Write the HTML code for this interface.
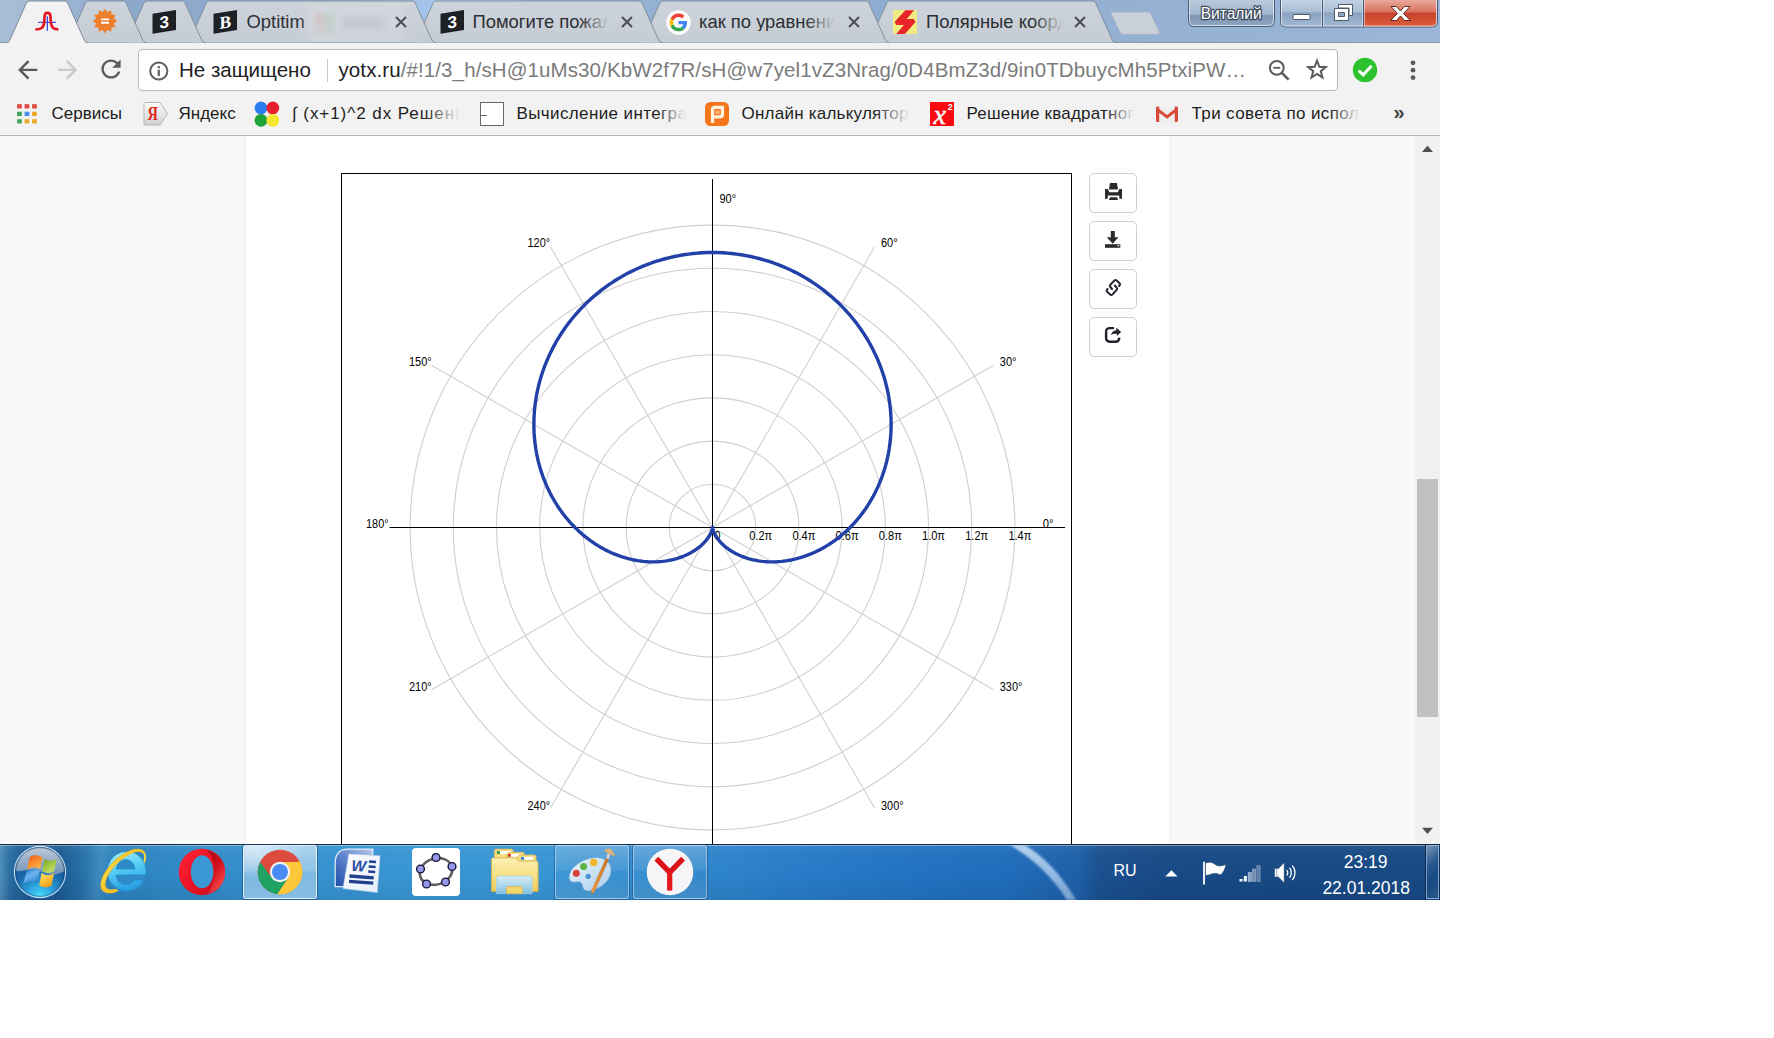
<!DOCTYPE html>
<html lang="ru"><head><meta charset="utf-8"><title>yotx.ru</title>
<style>
html,body{margin:0;padding:0;background:#fff;}
body{width:1774px;height:1038px;overflow:hidden;position:relative;font-family:"Liberation Sans",sans-serif;}
#shot{position:absolute;left:0;top:0;width:1440px;height:900px;overflow:hidden;background:#fff;}
.abs{position:absolute;}
.t{position:absolute;white-space:nowrap;line-height:1;}

#frame{position:absolute;left:0;top:0;width:1440px;height:43px;
 background:linear-gradient(90deg,#a9bed7 0px,#9cb5d3 60px,#8ca9cc 130px,#8eabce 300px,#a6c7ec 440px,#a4c5ea 470px,#94b1d4 640px,#8eaccf 900px,#93b0d3 1100px,#9ab7da 1440px);}
#toolbar{position:absolute;left:0;top:42px;width:1440px;height:93px;background:#f2f2f2;border-bottom:1px solid #b6b6b6;}
#omni{position:absolute;left:138px;top:49px;width:1198px;height:40px;background:#fff;border:1px solid #b9b9b9;border-radius:4px;box-sizing:content-box;}
.tabt{font-size:18.4px;color:#2b2f33;top:12px;}
.bm{font-size:17px;color:#1d1d1d;top:105px;}
.fade{position:absolute;}

#page{position:absolute;left:0;top:136px;width:1440px;height:708px;background:#f8f8f8;overflow:hidden;}
#col{position:absolute;left:246px;top:0;width:923px;height:708px;background:#fff;box-shadow:0 0 3px 1px rgba(0,0,0,.035);}
#sb{position:absolute;left:1415px;top:0;width:25px;height:708px;background:#f1f1f1;}
#thumb{position:absolute;left:1417px;top:343px;width:21px;height:238px;background:#c1c1c1;}
.pbtn{position:absolute;left:1089px;width:46px;height:38px;border:1px solid #d0d0d0;border-radius:5px;background:#fff;}

#tb{position:absolute;left:0;top:843px;width:1440px;height:57px;overflow:hidden;}
#tbbg{position:absolute;left:0;top:1px;width:1440px;height:56px;
 background:linear-gradient(90deg,#4f8fbb 0,#2a6c9f 10px,#1c5c95 26px,#1c5a92 60px,#2770a8 82px,#3385bd 100px,#2d83be 118px,#2f88c4 170px,#3590cd 260px,#3896d4 420px,#3794d4 560px,#2f86cc 700px,#287cc7 800px,#2272c0 920px,#206cba 1010px,#1e60a8 1078px,#1a5090 1100px,#184a86 1160px,#174983 1300px,#174a84 1440px);}
#tbbg:before{content:"";position:absolute;left:0;top:0;width:1440px;height:56px;
 background:linear-gradient(180deg,rgba(16,34,58,.9) 0,rgba(16,34,58,.9) 1px,rgba(255,255,255,.42) 1px,rgba(255,255,255,.42) 2px,rgba(255,255,255,.06) 2.2px,rgba(255,255,255,.02) 10px,rgba(0,0,0,0) 30px,rgba(0,0,20,.07) 56px);}
.tbtn{position:absolute;top:1.5px;height:54px;border-radius:3px;box-sizing:border-box;}
.tray{color:#fff;}

</style></head><body>
<div id="shot">
<div id="frame"></div>
<div id="toolbar"></div>
<svg class="abs" style="left:0;top:0" width="1440" height="44" viewBox="0 0 1440 44">
<defs><linearGradient id="itab" x1="0" y1="0" x2="0" y2="1"><stop offset="0" stop-color="#cdd3da"/><stop offset="1" stop-color="#c6ccd4"/></linearGradient></defs>
<rect x="0" y="42" width="1440" height="1" fill="#8f99a6"/>
<path d="M1112.5 12 L1147 12 C1149.5 12 1150.5 13 1151.5 15 L1159 31 C1160 33.5 1159 34.5 1156.5 34.5 L1124 34.5 C1121.5 34.5 1120.5 33.5 1119.5 31.5 L1111.5 15 C1110.5 13 1110.5 12 1112.5 12Z" fill="#c9d0d9" stroke="#a4b3c6" stroke-width="1"/>
<path d="M866.5 42.5 Q869 42.5 869.99 40.3 L886.61 3.2 Q887.6 1 890.1 1 L1092.3 1 Q1094.8 1 1095.79 3.2 L1112.41 40.3 Q1113.4 42.5 1115.9 42.5" fill="url(#itab)" stroke="#828e9e" stroke-width="1"/>
<path d="M639.7 42.5 Q642.2 42.5 643.19 40.3 L659.81 3.2 Q660.8 1 663.3 1 L865.5 1 Q868 1 868.99 3.2 L885.61 40.3 Q886.6 42.5 889.1 42.5" fill="url(#itab)" stroke="#828e9e" stroke-width="1"/>
<path d="M412.9 42.5 Q415.4 42.5 416.39 40.3 L433.01 3.2 Q434 1 436.5 1 L638.7 1 Q641.2 1 642.19 3.2 L658.81 40.3 Q659.8 42.5 662.3 42.5" fill="url(#itab)" stroke="#828e9e" stroke-width="1"/>
<path d="M186.1 42.5 Q188.6 42.5 189.59 40.3 L206.21 3.2 Q207.2 1 209.7 1 L411.9 1 Q414.4 1 415.39 3.2 L432.01 40.3 Q433 42.5 435.5 42.5" fill="url(#itab)" stroke="#828e9e" stroke-width="1"/>
<path d="M123.7 42.5 Q126.2 42.5 127.19 40.3 L143.81 3.2 Q144.8 1 147.3 1 L181.7 1 Q184.2 1 185.19 3.2 L201.81 40.3 Q202.8 42.5 205.3 42.5" fill="url(#itab)" stroke="#828e9e" stroke-width="1"/>
<path d="M65.2 42.5 Q67.7 42.5 68.69 40.3 L85.31 3.2 Q86.3 1 88.8 1 L122.8 1 Q125.3 1 126.29 3.2 L142.91 40.3 Q143.9 42.5 146.4 42.5" fill="url(#itab)" stroke="#828e9e" stroke-width="1"/>
<path d="M6.2 42.5 Q8.7 42.5 9.69 40.3 L26.31 3.2 Q27.3 1 29.8 1 L64.3 1 Q66.8 1 67.79 3.2 L84.41 40.3 Q85.4 42.5 87.9 42.5" fill="#f2f2f2" stroke="#7d8999" stroke-width="1"/>
<rect x="9.3" y="42" width="75.5" height="2" fill="#f2f2f2"/>
</svg>
<div class="t tabt" style="left:246.5px;top:12.5px;width:70px;overflow:hidden;">Optitim<span class="abs" style="right:0;top:0;bottom:0;width:4px;background:linear-gradient(90deg,#cad0d800,#cad0d8)"></span></div>
<div class="abs" style="left:300px;top:3px;width:112px;height:38px;background:linear-gradient(90deg,rgba(214,218,224,0),rgba(214,218,224,.55) 12px,rgba(214,218,224,.55) 100px,rgba(214,218,224,0))"></div>
<svg class="abs" style="left:306px;top:6px" width="100" height="34" viewBox="0 0 100 34"><defs><filter id="cb" x="-20%" y="-20%" width="140%" height="140%"><feGaussianBlur stdDeviation="2.6"/></filter></defs><g filter="url(#cb)" opacity=".2"><rect x="9" y="7" width="9" height="10" fill="#e0776a"/><rect x="19" y="7" width="9" height="10" fill="#7fbf7a"/><rect x="9" y="18" width="9" height="10" fill="#c9a08a"/><rect x="19" y="18" width="9" height="10" fill="#9ab58f"/><rect x="36" y="11" width="42" height="12" fill="#9aa0aa"/></g></svg>
<svg class="abs" style="left:392.7px;top:14px" width="16" height="16" viewBox="-8 -8 16 16"><path d="M-5 -5L5 5M5 -5L-5 5" stroke="#4a4f55" stroke-width="2" fill="none"/></svg>
<div class="t tabt" style="left:472.5px;top:12.5px;width:136px;overflow:hidden;">Помогите пожалуйста<span class="abs" style="right:0;top:0;bottom:0;width:30px;background:linear-gradient(90deg,#cad0d800,#cad0d8)"></span></div>
<svg class="abs" style="left:619.3px;top:14px" width="16" height="16" viewBox="-8 -8 16 16"><path d="M-5 -5L5 5M5 -5L-5 5" stroke="#4a4f55" stroke-width="2" fill="none"/></svg>
<div class="t tabt" style="left:699px;top:12.5px;width:136px;overflow:hidden;">как по уравнению<span class="abs" style="right:0;top:0;bottom:0;width:30px;background:linear-gradient(90deg,#cad0d800,#cad0d8)"></span></div>
<svg class="abs" style="left:846px;top:14px" width="16" height="16" viewBox="-8 -8 16 16"><path d="M-5 -5L5 5M5 -5L-5 5" stroke="#4a4f55" stroke-width="2" fill="none"/></svg>
<div class="t tabt" style="left:926px;top:12.5px;width:137px;overflow:hidden;">Полярные координаты<span class="abs" style="right:0;top:0;bottom:0;width:30px;background:linear-gradient(90deg,#cad0d800,#cad0d8)"></span></div>
<svg class="abs" style="left:1072.2px;top:14px" width="16" height="16" viewBox="-8 -8 16 16"><path d="M-5 -5L5 5M5 -5L-5 5" stroke="#4a4f55" stroke-width="2" fill="none"/></svg>
<div id="omni"></div>
<div class="t" style="left:179px;top:59.5px;font-size:20.5px;color:#222;">Не защищено</div>
<div class="abs" style="left:327px;top:59px;width:1px;height:23px;background:#c8c8c8"></div>
<div class="t" style="left:338.5px;top:59.5px;font-size:20.5px;color:#222;letter-spacing:0.1px">yotx.ru<span style="color:#7b7b7b">/#!1/3_h/sH@1uMs30/KbW2f7R/sH@w7yel1vZ3Nrag/0D4BmZ3d/9in0TDbuycMh5PtxiPW…</span></div>
<svg class="abs" style="left:33px;top:9px;" width="28" height="26" viewBox="0 0 28 26"><path d="M14.35 7.3V21.7M5 13.4H23.1" stroke="#3f4ce6" stroke-width="1.3" fill="none"/><path d="M2.4 20.4C8 20.4 10.6 19 11.2 13L11.6 7C11.8 4.2 12.8 3.8 14.5 3.8C16.2 3.8 17.2 4.2 17.4 7L17.8 13C18.4 19 21 20.4 25.4 20.4" stroke="#e01b24" stroke-width="2.7" fill="none" stroke-linecap="butt"/></svg>
<svg class="abs" style="left:90.8px;top:7.4px;" width="28" height="28" viewBox="0 0 28 28"><polygon points="14,1.7 16.41,5.02 20.15,3.35 20.58,7.42 24.65,7.85 22.98,11.59 26.3,14 22.98,16.41 24.65,20.15 20.58,20.58 20.15,24.65 16.41,22.98 14,26.3 11.59,22.98 7.85,24.65 7.42,20.58 3.35,20.15 5.02,16.41 1.7,14 5.02,11.59 3.35,7.85 7.42,7.42 7.85,3.35 11.59,5.02" fill="#ee7f2e"/><rect x="10" y="11.4" width="8" height="1.9" rx=".5" fill="#fff"/><rect x="10" y="14.8" width="8" height="1.9" rx=".5" fill="#fff"/></svg>
<svg class="abs" style="left:152px;top:9px;" width="26" height="26" viewBox="0 0 26 26"><path d="M0.5 4.8L24 1V21L0.5 24.8Z" fill="#1d2126"/><text x="12.3" y="19" font-family="Liberation Sans,sans-serif" font-weight="bold" font-size="17" fill="#fff" text-anchor="middle" transform="skewY(-9) translate(0,2)">3</text></svg>
<svg class="abs" style="left:213px;top:9px;" width="26" height="26" viewBox="0 0 26 26"><path d="M0.5 4.8L24 1V21L0.5 24.8Z" fill="#1d2126"/><text x="12.3" y="19" font-family="Liberation Serif,serif" font-weight="bold" font-size="17.5" fill="#fff" text-anchor="middle" transform="skewY(-9) translate(0,2)">B</text></svg>
<svg class="abs" style="left:440px;top:9px;" width="26" height="26" viewBox="0 0 26 26"><path d="M0.5 4.8L24 1V21L0.5 24.8Z" fill="#1d2126"/><text x="12.3" y="19" font-family="Liberation Sans,sans-serif" font-weight="bold" font-size="17" fill="#fff" text-anchor="middle" transform="skewY(-9) translate(0,2)">3</text></svg>
<svg class="abs" style="left:665.5px;top:9.5px;" width="25" height="25" viewBox="0 0 25 25"><circle cx="12.5" cy="12.5" r="12.3" fill="#fbfbfb"/><g transform="translate(3.6,3.6) scale(0.37)"><path fill="#EA4335" d="M24 9.5c3.54 0 6.71 1.22 9.21 3.6l6.85-6.85C35.9 2.38 30.47 0 24 0 14.62 0 6.51 5.38 2.56 13.22l7.98 6.19C12.43 13.72 17.74 9.5 24 9.5z"/><path fill="#4285F4" d="M46.98 24.55c0-1.57-.15-3.09-.38-4.55H24v9.02h12.94c-.58 2.96-2.26 5.48-4.78 7.18l7.73 6c4.51-4.18 7.09-10.36 7.09-17.65z"/><path fill="#FBBC05" d="M10.53 28.59c-.48-1.45-.76-2.99-.76-4.59s.27-3.14.76-4.59l-7.98-6.19C.92 16.46 0 20.12 0 24c0 3.88.92 7.54 2.56 10.78l7.97-6.19z"/><path fill="#34A853" d="M24 48c6.48 0 11.93-2.13 15.89-5.81l-7.73-6c-2.15 1.45-4.92 2.3-8.16 2.3-6.26 0-11.57-4.22-13.47-9.91l-7.98 6.19C6.51 42.62 14.62 48 24 48z"/></g></svg>
<svg class="abs" style="left:893px;top:10px;" width="24" height="24" viewBox="0 0 24 24"><rect width="24" height="24" fill="#f1ec82"/><path d="M12.3 0.15H21.1L13.7 9.1H20.8L22.5 12L11.85 23.9H3.2L10.9 14.95H3.4L1.5 12Z" fill="#e8252b"/></svg>
<svg class="abs" style="left:1180px;top:0" width="260" height="34" viewBox="0 0 260 34">
<defs>
<linearGradient id="wb" x1="0" y1="0" x2="0" y2="1"><stop offset="0" stop-color="#c4d3e4"/><stop offset=".45" stop-color="#a9bdd4"/><stop offset=".5" stop-color="#8aa3c0"/><stop offset="1" stop-color="#a4bad3"/></linearGradient>
<linearGradient id="wc" x1="0" y1="0" x2="0" y2="1"><stop offset="0" stop-color="#e9a99d"/><stop offset=".45" stop-color="#d9705c"/><stop offset=".5" stop-color="#c8432c"/><stop offset="1" stop-color="#dd5e3c"/></linearGradient>
<linearGradient id="wu" x1="0" y1="0" x2="0" y2="1"><stop offset="0" stop-color="#bccbdc"/><stop offset=".55" stop-color="#a2b6cd"/><stop offset=".6" stop-color="#7f97b3"/><stop offset="1" stop-color="#8fa6c1"/></linearGradient>
<filter id="bl"><feGaussianBlur stdDeviation="2"/></filter>
</defs>
<path d="M12 25H92M104 26H254" stroke="#51657f" stroke-width="8" opacity=".7" filter="url(#bl)"/>
<path d="M8.5 -1V20C8.5 24 10.5 26.5 14.5 26.5H88.5C92.5 26.5 94.5 24 94.5 20V-1Z" fill="url(#wu)" stroke="#4e5f75" stroke-width="1"/>
<path d="M9.5 0V20C9.5 23.5 11 25.5 14.5 25.5H88.5C92 25.5 93.5 23.5 93.5 20V0" fill="none" stroke="#dfe8f2" stroke-width="1" opacity=".8"/>
<path d="M100.5 -1V21C100.5 25 102.5 27 106.5 27H251.5C255.5 27 257.5 25 257.5 21V-1Z" fill="url(#wb)" stroke="#4a5a70" stroke-width="1"/>
<path d="M183.5 0H257V21C257 24.5 255 26.5 251.5 26.5H183.5Z" fill="url(#wc)"/>
<path d="M101.5 0V21C101.5 24.5 103 26 106.5 26H251.5C255 26 256.5 24.5 256.5 21V0" fill="none" stroke="#eef3f9" stroke-width="1" opacity=".75"/>
<path d="M142.5 0V26.5M183.5 0V26.5" stroke="#4a5a70" stroke-width="1"/>
<path d="M143.5 0V26M184.5 0V26M141.5 0V26M182.5 0V26" stroke="#e8eef6" stroke-width="1" opacity=".55"/>
<rect x="113" y="14.5" width="17" height="5" rx="1" fill="#fff" stroke="#4c5a6c" stroke-width="1"/>
<g fill="#fff" stroke="#4c5a6c" stroke-width="1"><path d="M158.5 4.5H172.5V15.5H169V8H158.5Z"/><path d="M154.5 8.5H168.5V20.5H154.5Z M158.5 12.5V16.5H164.5V12.5Z" fill-rule="evenodd"/></g>
<path d="M211 6.5H216.5L220.5 11L224.5 6.5H230L223.5 13.5L230.5 20.5H224.5L220.5 16L216.5 20.5H210.5L217.5 13.5Z" fill="#fff" stroke="#5b2a22" stroke-width="1" stroke-linejoin="round"/>
<text x="51.2" y="19.3" text-anchor="middle" textLength="61" lengthAdjust="spacingAndGlyphs" font-family="Liberation Sans,sans-serif" font-size="17" fill="#fff" stroke="#3c4a5c" stroke-width="2.6" stroke-linejoin="round" paint-order="stroke" style="paint-order:stroke">Виталий</text>
</svg>
<svg class="abs" style="left:13.6px;top:56.1px;" width="24" height="24" viewBox="0.6 0.4 20 20"><path d="M20 11H7.83l5.59-5.59L12 4l-8 8 8 8 1.41-1.41L7.83 13H20v-2z" fill="#5a5a5a"/></svg>
<svg class="abs" style="left:55.4px;top:56.1px;" width="24" height="24" viewBox="1.4 0.4 20 20"><path d="M12 4l-1.41 1.41L16.17 11H4v2h12.17l-5.58 5.59L12 20l8-8z" fill="#c9c9c9"/></svg>
<svg class="abs" style="left:98.7px;top:56.7px;" width="24" height="24" viewBox="2 2 20 20"><path d="M17.65 6.35C16.2 4.9 14.21 4 12 4c-4.42 0-7.99 3.58-7.99 8s3.57 8 7.99 8c3.73 0 6.84-2.55 7.73-6h-2.08c-.820 2.33-3.04 4-5.65 4-3.31 0-6-2.69-6-6s2.69-6 6-6c1.66 0 3.14.690 4.22 1.78L13 11h7V4l-2.35 2.35z" fill="#5a5a5a"/></svg>
<svg class="abs" style="left:147px;top:59px;" width="24" height="24" viewBox="0 0 24 24"><circle cx="11.8" cy="12" r="8.6" fill="none" stroke="#5f5f5f" stroke-width="2"/><rect x="10.7" y="10.7" width="2.2" height="6.3" fill="#5f5f5f"/><rect x="10.7" y="7" width="2.2" height="2.3" fill="#5f5f5f"/></svg>
<svg class="abs" style="left:1266px;top:57px;" width="26" height="26" viewBox="0 0 26 26"><circle cx="10.8" cy="10.8" r="6.9" fill="none" stroke="#5a5a5a" stroke-width="2"/><path d="M15.8 15.8L22.6 22.6" stroke="#5a5a5a" stroke-width="2.6"/><path d="M7.3 10.8H14.3" stroke="#5a5a5a" stroke-width="1.8"/></svg>
<svg class="abs" style="left:1304px;top:56px;" width="26" height="26" viewBox="0 0 26 26"><polygon points="13,4.7 15.35,10.76 21.84,11.13 16.8,15.24 18.47,21.52 13,18 7.53,21.52 9.2,15.24 4.16,11.13 10.65,10.76" fill="none" stroke="#5a5a5a" stroke-width="2" stroke-linejoin="miter"/></svg>
<svg class="abs" style="left:1352px;top:57px;" width="26" height="26" viewBox="0 0 26 26"><circle cx="13" cy="13" r="12.2" fill="#2cc12f"/><path d="M6.8 13.6L11.2 17.8L19.6 8.8" fill="none" stroke="#fff" stroke-width="3"/></svg>
<svg class="abs" style="left:1408px;top:58px;" width="10" height="24" viewBox="0 0 10 24"><circle cx="5" cy="4.8" r="2.4" fill="#5a5a5a"/><circle cx="5" cy="12.2" r="2.4" fill="#5a5a5a"/><circle cx="5" cy="19.6" r="2.4" fill="#5a5a5a"/></svg>
<svg class="abs" style="left:17px;top:103.5px;" width="20" height="20" viewBox="0 0 20 20"><rect x="0.1" y="0.2" width="4.7" height="4.3" fill="#dc4b3e"/><rect x="7.6" y="0.2" width="4.7" height="4.3" fill="#dc4b3e"/><rect x="15.1" y="0.2" width="4.7" height="4.3" fill="#dc4b3e"/><rect x="0.1" y="7.7" width="4.7" height="4.3" fill="#3fa45b"/><rect x="7.6" y="7.7" width="4.7" height="4.3" fill="#4a8af4"/><rect x="15.1" y="7.7" width="4.7" height="4.3" fill="#e9a928"/><rect x="0.1" y="15.2" width="4.7" height="4.3" fill="#3fa45b"/><rect x="7.6" y="15.2" width="4.7" height="4.3" fill="#e9a928"/><rect x="15.1" y="15.2" width="4.7" height="4.3" fill="#e9a928"/></svg>
<div class="t bm" style="left:51.5px;letter-spacing:0.02px">Сервисы</div>
<svg class="abs" style="left:142.6px;top:101px;" width="26" height="26" viewBox="0 0 26 26"><defs><linearGradient id="yg" x1="0" y1="0" x2="0" y2="1"><stop offset="0" stop-color="#fdfdfd"/><stop offset="1" stop-color="#cfcfcf"/></linearGradient></defs><path d="M2.5 1.5H17L24.5 12.5L17 24H2.5C1.5 24 1 23.5 1 22.5V3C1 2 1.5 1.5 2.5 1.5Z" fill="url(#yg)" stroke="#b5b5b5" stroke-width="1"/><text x="9.8" y="19.5" font-family="Liberation Serif,serif" font-weight="bold" font-size="18" fill="#dd2a20" text-anchor="middle" transform="scale(0.8,1) translate(2.4,0)">Я</text></svg>
<div class="t bm" style="left:178.5px;letter-spacing:0px">Яндекс</div>
<svg class="abs" style="left:253px;top:99.5px;" width="28" height="28" viewBox="0 0 28 28"><circle cx="8" cy="8" r="6.4" fill="#2e7df0"/><circle cx="19.8" cy="8" r="6.4" fill="#e8212d"/><circle cx="8" cy="20.3" r="6.4" fill="#1fa336"/><circle cx="19.8" cy="20.3" r="6.4" fill="#f5e62f"/></svg>
<div class="t bm" style="left:292px;top:105px;width:168px;overflow:hidden;letter-spacing:0.95px;">∫ (x+1)^2 dx Решение<span class="abs" style="right:0;top:0;bottom:0;width:36px;background:linear-gradient(90deg,#f2f2f200,#f2f2f2)"></span></div>
<div class="abs" style="left:480px;top:102px;width:22px;height:22px;border:1.5px solid #686868;background:#fff"></div><div class="abs" style="left:481px;top:115px;width:6px;height:1.3px;background:#666"></div>
<div class="t bm" style="left:516.5px;top:105px;width:169px;overflow:hidden;letter-spacing:0.38px;">Вычисление интеграла<span class="abs" style="right:0;top:0;bottom:0;width:30px;background:linear-gradient(90deg,#f2f2f200,#f2f2f2)"></span></div>
<svg class="abs" style="left:705px;top:102px;" width="24" height="24" viewBox="0 0 24 24"><rect width="24" height="24" rx="5.5" fill="#f4751a"/><path d="M7.55 21.1V7.6Q7.55 5.45 9.7 5.45H17.45V12.3Q17.45 14.95 14.8 14.95H9" fill="none" stroke="#fdf2dc" stroke-width="3.3"/><rect x="10.4" y="8.3" width="4.2" height="3.8" fill="#f9b47c"/></svg>
<div class="t bm" style="left:741.5px;top:105px;width:168px;overflow:hidden;letter-spacing:0.23px;">Онлайн калькулятор<span class="abs" style="right:0;top:0;bottom:0;width:36px;background:linear-gradient(90deg,#f2f2f200,#f2f2f2)"></span></div>
<svg class="abs" style="left:930px;top:102px;" width="24" height="24" viewBox="0 0 24 24"><rect width="24" height="24" fill="#f80a10"/><text x="9.6" y="22" font-family="Liberation Serif,serif" font-style="italic" font-size="28" fill="#fff" stroke="#fff" stroke-width=".5" text-anchor="middle">x</text><text x="20.2" y="8.3" font-family="Liberation Sans,sans-serif" font-weight="bold" font-size="9" fill="#fff" text-anchor="middle">2</text></svg>
<div class="t bm" style="left:966.5px;top:105px;width:168px;overflow:hidden;letter-spacing:0.23px;">Решение квадратного<span class="abs" style="right:0;top:0;bottom:0;width:30px;background:linear-gradient(90deg,#f2f2f200,#f2f2f2)"></span></div>
<svg class="abs" style="left:1155px;top:105px;" width="24" height="18" viewBox="0 0 24 18"><rect x="1" y="1.5" width="22" height="15.5" rx="1.5" fill="#eeeeee"/><path d="M1 3C1 2 1.8 1.5 2.8 1.5H4.2V17H2.8C1.8 17 1 16.5 1 15.5Z M23 3C23 2 22.2 1.5 21.2 1.5H19.8V17H21.2C22.2 17 23 16.5 23 15.5Z" fill="#d94a38"/><path d="M1.8 2.2L12 10L22.2 2.2L22.2 6L12 13.8L1.8 6Z" fill="#d94a38"/></svg>
<div class="t bm" style="left:1191.5px;top:105px;width:168px;overflow:hidden;letter-spacing:0.38px;">Три совета по использованию<span class="abs" style="right:0;top:0;bottom:0;width:30px;background:linear-gradient(90deg,#f2f2f200,#f2f2f2)"></span></div>
<div class="t" style="left:1393.5px;top:102px;font-size:20px;color:#444;font-weight:bold">»</div>
<div id="page">
<div id="col"></div>
<div id="sb"></div>
<div id="thumb"></div>
<svg class="abs" style="left:1415px;top:0" width="25" height="708" viewBox="0 0 25 708"><path d="M7 16L12.5 9.8L18 16Z" fill="#505050"/><path d="M7 691.8L12.5 698L18 691.8Z" fill="#505050"/></svg>
<svg class="abs" style="left:341px;top:37px" width="731" height="690" viewBox="0 0 731 690" font-family="Liberation Sans,sans-serif">
<rect x="0.5" y="0.5" width="730" height="710" fill="#fff" stroke="#000" stroke-width="1"/>
<circle cx="371.5" cy="354.5" r="43.2" fill="none" stroke="#cfcfcf" stroke-width="1.1"/>
<circle cx="371.5" cy="354.5" r="86.4" fill="none" stroke="#cfcfcf" stroke-width="1.1"/>
<circle cx="371.5" cy="354.5" r="129.6" fill="none" stroke="#cfcfcf" stroke-width="1.1"/>
<circle cx="371.5" cy="354.5" r="172.8" fill="none" stroke="#cfcfcf" stroke-width="1.1"/>
<circle cx="371.5" cy="354.5" r="216" fill="none" stroke="#cfcfcf" stroke-width="1.1"/>
<circle cx="371.5" cy="354.5" r="259.2" fill="none" stroke="#cfcfcf" stroke-width="1.1"/>
<circle cx="371.5" cy="354.5" r="302.4" fill="none" stroke="#cfcfcf" stroke-width="1.1"/>
<path d="M371.5 354.5L652.09 192.5M371.5 354.5L533.5 73.91M371.5 354.5L209.5 73.91M371.5 354.5L90.91 192.5M371.5 354.5L90.91 516.5M371.5 354.5L209.5 635.09M371.5 354.5L533.5 635.09M371.5 354.5L652.09 516.5" stroke="#cfcfcf" stroke-width="1.1" fill="none"/>
<path d="M48.5 354.5H724M371.5 6V690" stroke="#000" stroke-width="1" fill="none"/>
<text x="378.5" y="30" font-size="12.3" text-anchor="start" fill="#000" textLength="16.65" lengthAdjust="spacingAndGlyphs">90°</text>
<text x="186.5" y="74" font-size="12.3" text-anchor="start" fill="#000" textLength="22.6" lengthAdjust="spacingAndGlyphs">120°</text>
<text x="540" y="74" font-size="12.3" text-anchor="start" fill="#000" textLength="16.65" lengthAdjust="spacingAndGlyphs">60°</text>
<text x="68" y="193" font-size="12.3" text-anchor="start" fill="#000" textLength="22.6" lengthAdjust="spacingAndGlyphs">150°</text>
<text x="658.8" y="193" font-size="12.3" text-anchor="start" fill="#000" textLength="16.65" lengthAdjust="spacingAndGlyphs">30°</text>
<text x="25" y="355" font-size="12.3" text-anchor="start" fill="#000" textLength="22.6" lengthAdjust="spacingAndGlyphs">180°</text>
<text x="701.8" y="354.5" font-size="12.3" text-anchor="start" fill="#000" textLength="10.7" lengthAdjust="spacingAndGlyphs">0°</text>
<text x="68" y="518.3" font-size="12.3" text-anchor="start" fill="#000" textLength="22.6" lengthAdjust="spacingAndGlyphs">210°</text>
<text x="658.8" y="518.3" font-size="12.3" text-anchor="start" fill="#000" textLength="22.6" lengthAdjust="spacingAndGlyphs">330°</text>
<text x="186.5" y="637" font-size="12.3" text-anchor="start" fill="#000" textLength="22.6" lengthAdjust="spacingAndGlyphs">240°</text>
<text x="540" y="637" font-size="12.3" text-anchor="start" fill="#000" textLength="22.6" lengthAdjust="spacingAndGlyphs">300°</text>
<text x="408.2" y="367" font-size="12.3" fill="#000" textLength="23" lengthAdjust="spacingAndGlyphs">0.2π</text>
<text x="451.4" y="367" font-size="12.3" fill="#000" textLength="23" lengthAdjust="spacingAndGlyphs">0.4π</text>
<text x="494.6" y="367" font-size="12.3" fill="#000" textLength="23" lengthAdjust="spacingAndGlyphs">0.6π</text>
<text x="537.8" y="367" font-size="12.3" fill="#000" textLength="23" lengthAdjust="spacingAndGlyphs">0.8π</text>
<text x="581" y="367" font-size="12.3" fill="#000" textLength="23" lengthAdjust="spacingAndGlyphs">1.0π</text>
<text x="624.2" y="367" font-size="12.3" fill="#000" textLength="23" lengthAdjust="spacingAndGlyphs">1.2π</text>
<text x="667.4" y="367" font-size="12.3" fill="#000" textLength="23" lengthAdjust="spacingAndGlyphs">1.4π</text>
<text x="373.5" y="367" font-size="12.3" fill="#000" textLength="6" lengthAdjust="spacingAndGlyphs">0</text>
<path d="M371.5 354.5 L371.5 354.52 L371.5 354.58 L371.51 354.69 L371.52 354.83 L371.55 355.02 L371.58 355.25 L371.62 355.52 L371.69 355.83 L371.76 356.17 L371.86 356.56 L371.98 356.98 L372.12 357.44 L372.29 357.93 L372.49 358.46 L372.71 359.03 L372.97 359.62 L373.26 360.25 L373.58 360.9 L373.94 361.58 L374.34 362.29 L374.77 363.03 L375.25 363.78 L375.77 364.56 L376.34 365.36 L376.94 366.18 L377.6 367.01 L378.3 367.85 L379.06 368.71 L379.86 369.58 L380.71 370.45 L381.62 371.33 L382.57 372.22 L383.58 373.1 L384.65 373.99 L385.76 374.87 L386.94 375.74 L388.16 376.61 L389.45 377.47 L390.78 378.31 L392.18 379.14 L393.63 379.95 L395.13 380.75 L396.69 381.52 L398.31 382.26 L399.98 382.98 L401.7 383.66 L403.48 384.32 L405.31 384.94 L407.19 385.53 L409.13 386.07 L411.11 386.58 L413.14 387.04 L415.23 387.45 L417.35 387.82 L419.53 388.13 L421.75 388.39 L424.01 388.6 L426.31 388.75 L428.66 388.84 L431.04 388.88 L433.46 388.84 L435.91 388.75 L438.39 388.58 L440.91 388.35 L443.45 388.05 L446.02 387.68 L448.61 387.23 L451.23 386.71 L453.86 386.12 L456.52 385.44 L459.18 384.69 L461.86 383.86 L464.55 382.95 L467.24 381.95 L469.94 380.88 L472.64 379.72 L475.34 378.47 L478.03 377.14 L480.72 375.73 L483.4 374.23 L486.06 372.64 L488.71 370.97 L491.34 369.21 L493.95 367.37 L496.54 365.44 L499.1 363.42 L501.63 361.32 L504.12 359.13 L506.58 356.86 L509 354.5 L511.38 352.06 L513.71 349.53 L516 346.93 L518.23 344.24 L520.42 341.47 L522.54 338.62 L524.61 335.7 L526.61 332.7 L528.55 329.63 L530.42 326.48 L532.23 323.26 L533.96 319.97 L535.61 316.61 L537.19 313.19 L538.69 309.7 L540.11 306.15 L541.44 302.55 L542.68 298.88 L543.84 295.16 L544.9 291.39 L545.87 287.57 L546.75 283.7 L547.52 279.78 L548.2 275.83 L548.78 271.83 L549.26 267.8 L549.63 263.74 L549.9 259.64 L550.06 255.52 L550.12 251.38 L550.06 247.21 L549.9 243.02 L549.62 238.83 L549.24 234.62 L548.74 230.4 L548.12 226.17 L547.4 221.95 L546.56 217.73 L545.61 213.51 L544.54 209.31 L543.35 205.11 L542.06 200.93 L540.64 196.77 L539.12 192.63 L537.48 188.52 L535.72 184.44 L533.86 180.39 L531.88 176.38 L529.79 172.41 L527.59 168.48 L525.28 164.6 L522.86 160.77 L520.34 156.99 L517.71 153.27 L514.97 149.6 L512.13 146 L509.19 142.47 L506.16 139.01 L503.02 135.61 L499.79 132.3 L496.46 129.06 L493.05 125.9 L489.54 122.83 L485.95 119.84 L482.28 116.94 L478.52 114.13 L474.68 111.42 L470.77 108.81 L466.78 106.29 L462.72 103.88 L458.59 101.57 L454.4 99.36 L450.15 97.26 L445.83 95.27 L441.46 93.4 L437.04 91.63 L432.57 89.98 L428.05 88.45 L423.49 87.03 L418.89 85.74 L414.25 84.56 L409.59 83.5 L404.89 82.57 L400.17 81.76 L395.42 81.07 L390.66 80.5 L385.88 80.07 L381.09 79.75 L376.3 79.56 L371.5 79.5 L366.7 79.56 L361.91 79.75 L357.12 80.07 L352.34 80.5 L347.58 81.07 L342.83 81.76 L338.11 82.57 L333.41 83.5 L328.75 84.56 L324.11 85.74 L319.51 87.03 L314.95 88.45 L310.43 89.98 L305.96 91.63 L301.54 93.4 L297.17 95.27 L292.85 97.26 L288.6 99.36 L284.41 101.57 L280.28 103.88 L276.22 106.29 L272.23 108.81 L268.32 111.42 L264.48 114.13 L260.72 116.94 L257.05 119.84 L253.46 122.83 L249.95 125.9 L246.54 129.06 L243.21 132.3 L239.98 135.61 L236.84 139.01 L233.81 142.47 L230.87 146 L228.03 149.6 L225.29 153.27 L222.66 156.99 L220.14 160.77 L217.72 164.6 L215.41 168.48 L213.21 172.41 L211.12 176.38 L209.14 180.39 L207.28 184.44 L205.52 188.52 L203.88 192.63 L202.36 196.77 L200.94 200.93 L199.65 205.11 L198.46 209.31 L197.39 213.51 L196.44 217.73 L195.6 221.95 L194.88 226.17 L194.26 230.4 L193.76 234.62 L193.38 238.83 L193.1 243.02 L192.94 247.21 L192.88 251.37 L192.94 255.52 L193.1 259.64 L193.37 263.74 L193.74 267.8 L194.22 271.83 L194.8 275.83 L195.48 279.78 L196.25 283.7 L197.13 287.57 L198.1 291.39 L199.16 295.16 L200.32 298.88 L201.56 302.55 L202.89 306.15 L204.31 309.7 L205.81 313.19 L207.39 316.61 L209.04 319.97 L210.77 323.26 L212.58 326.48 L214.45 329.63 L216.39 332.7 L218.39 335.7 L220.46 338.62 L222.58 341.47 L224.77 344.24 L227 346.93 L229.29 349.53 L231.62 352.06 L234 354.5 L236.42 356.86 L238.88 359.13 L241.37 361.32 L243.9 363.42 L246.46 365.44 L249.05 367.37 L251.66 369.21 L254.29 370.97 L256.94 372.64 L259.6 374.23 L262.28 375.73 L264.97 377.14 L267.66 378.47 L270.36 379.72 L273.06 380.88 L275.76 381.95 L278.45 382.95 L281.14 383.86 L283.82 384.69 L286.48 385.44 L289.14 386.12 L291.77 386.71 L294.39 387.23 L296.98 387.68 L299.55 388.05 L302.09 388.35 L304.61 388.58 L307.09 388.75 L309.54 388.84 L311.96 388.88 L314.34 388.84 L316.69 388.75 L318.99 388.6 L321.25 388.39 L323.47 388.13 L325.65 387.82 L327.77 387.45 L329.86 387.04 L331.89 386.58 L333.87 386.07 L335.81 385.53 L337.69 384.94 L339.52 384.32 L341.3 383.66 L343.02 382.98 L344.69 382.26 L346.31 381.52 L347.87 380.75 L349.37 379.95 L350.82 379.14 L352.22 378.31 L353.55 377.47 L354.84 376.61 L356.06 375.74 L357.24 374.87 L358.35 373.99 L359.42 373.1 L360.43 372.22 L361.38 371.33 L362.29 370.45 L363.14 369.58 L363.94 368.71 L364.7 367.85 L365.4 367.01 L366.06 366.18 L366.66 365.36 L367.23 364.56 L367.75 363.78 L368.23 363.03 L368.66 362.29 L369.06 361.58 L369.42 360.9 L369.74 360.25 L370.03 359.62 L370.29 359.03 L370.51 358.46 L370.71 357.93 L370.88 357.44 L371.02 356.98 L371.14 356.56 L371.24 356.17 L371.31 355.83 L371.38 355.52 L371.42 355.25 L371.45 355.02 L371.48 354.83 L371.49 354.69 L371.5 354.58 L371.5 354.52 L371.5 354.5" fill="none" stroke="#2141a8" stroke-width="3.4" stroke-linejoin="round" stroke-linecap="round"/>
</svg>
<div class="pbtn" style="top:37px"><svg class="abs" style="left:10px;top:4px" width="26" height="26" viewBox="0 0 26 26"><path d="M10 5H17L18 11.6H8.9Z" fill="#2b2b2b"/><path d="M5 11.1H7.8L9.3 14.3H17.8L19.3 11.1H22V20.8H19.3V17.5H7.8V20.8H5Z" fill="#2b2b2b"/><path d="M10 19.2H17L18 21.9H8.9Z" fill="#2b2b2b"/></svg></div>
<div class="pbtn" style="top:85px"><svg class="abs" style="left:10px;top:4px" width="26" height="26" viewBox="0 0 26 26"><path d="M10.8 5.1H14.8V11.3H18.5L12.65 17.7L6.8 11.3H10.8Z" fill="#2b2b2b"/><path d="M5 18.2H20.3V21.8H5Z" fill="#2b2b2b"/><ellipse cx="18.4" cy="19.8" rx="1" ry=".7" fill="#fff"/></svg></div>
<div class="pbtn" style="top:133px"><svg class="abs" style="left:10px;top:4px" width="26" height="26" viewBox="0 0 26 26"><g fill="none" stroke="#22222c" stroke-width="2" stroke-linecap="round" stroke-linejoin="round"><path d="M12 15L10.3 13C9.6 12.2 9.6 11.6 10.3 10.8L14.3 6.6C15.1 5.8 15.8 5.8 16.6 6.5L19.6 9.2C20.4 10 20.4 10.6 19.7 11.3L19 12"/><path d="M14.8 11.5L16.7 13.7C17.4 14.5 17.4 15.1 16.7 15.9L12.5 20.4C11.7 21.2 11 21.2 10.2 20.5L7.1 17.8C6.3 17 6.3 16.4 7 15.7L7.6 15"/></g></svg></div>
<div class="pbtn" style="top:181px"><svg class="abs" style="left:10px;top:4px" width="26" height="26" viewBox="0 0 26 26"><path d="M14 6.1H9.7C7.3 6.1 6.1 7.3 6.1 9.7V16.1C6.1 18.5 7.3 19.7 9.7 19.7H15.5C17.9 19.7 19.1 18.500 19.3 15.6" fill="none" stroke="#22222c" stroke-width="2.4"/><path d="M16.3 5.5L21.1 10L16.9 14.1V11.8C14.3 11.600 12.4 12 10.9 13.100C11.5 10.3 13.5 8.500 16.3 8.300Z" fill="#22222c"/></svg></div>
</div>
<div id="tb">
<div id="tbbg"></div>
<svg class="abs" style="left:990px;top:2px" width="120" height="55" viewBox="0 0 120 55"><defs><filter id="tbl"><feGaussianBlur stdDeviation="1.3"/></filter><linearGradient id="rg" x1="0" y1="0" x2="0" y2="1"><stop offset="0" stop-color="#d8ecff" stop-opacity=".8"/><stop offset="1" stop-color="#cfe6ff" stop-opacity=".5"/></linearGradient></defs><path d="M20 0C42 13 62 31 77 55H86C71 29 54 12 35 0Z" fill="url(#rg)" filter="url(#tbl)"/></svg>
<div class="abs" style="left:70px;top:0;width:60px;height:57px;background:linear-gradient(100deg,rgba(255,255,255,0) 30%,rgba(255,255,255,.05) 50%,rgba(255,255,255,0) 62%)"></div>
<div class="tbtn" style="left:243px;width:74px;border:1px solid rgba(235,245,255,.85);background:radial-gradient(ellipse 90% 80% at 15% 5%,rgba(255,255,255,.55),rgba(255,255,255,0) 75%),linear-gradient(180deg,rgba(240,248,255,.62) 0,rgba(222,238,252,.54) 46%,rgba(196,226,247,.50) 52%,rgba(196,228,250,.58) 100%);box-shadow:0 0 0 1px rgba(30,70,110,.55)"></div>
<div class="tbtn" style="left:554.5px;width:74px;border:1px solid rgba(210,232,250,.55);background:linear-gradient(180deg,rgba(255,255,255,.22) 0,rgba(255,255,255,.10) 45%,rgba(255,255,255,.02) 50%,rgba(255,255,255,.10) 100%);box-shadow:0 0 0 1px rgba(20,60,110,.45)"></div>
<div class="tbtn" style="left:632.8px;width:74px;border:1px solid rgba(210,232,250,.55);background:linear-gradient(180deg,rgba(255,255,255,.22) 0,rgba(255,255,255,.10) 45%,rgba(255,255,255,.02) 50%,rgba(255,255,255,.10) 100%);box-shadow:0 0 0 1px rgba(20,60,110,.45)"></div>
<svg class="abs" style="left:12px;top:1px" width="56" height="56" viewBox="0 0 56 56">
<defs>
<radialGradient id="ob" cx=".5" cy="1" r=".95"><stop offset="0" stop-color="#4fe3ff"/><stop offset=".28" stop-color="#2aa0dc"/><stop offset=".6" stop-color="#1a64a6"/><stop offset="1" stop-color="#1b4f8c"/></radialGradient>
<linearGradient id="og" x1="0" y1="0" x2="0" y2="1"><stop offset="0" stop-color="#c9d3df" stop-opacity=".95"/><stop offset="1" stop-color="#8fa6c0" stop-opacity=".75"/></linearGradient>
<linearGradient id="f1" x1="0" y1="0" x2=".6" y2="1"><stop offset="0" stop-color="#e8541f"/><stop offset=".5" stop-color="#f6892a"/><stop offset="1" stop-color="#f9b04a"/></linearGradient>
<linearGradient id="f2" x1="0" y1="0" x2=".6" y2="1"><stop offset="0" stop-color="#6ea032"/><stop offset=".5" stop-color="#9cc63f"/><stop offset="1" stop-color="#c6dd6c"/></linearGradient>
<linearGradient id="f3" x1="0" y1="0" x2=".6" y2="1"><stop offset="0" stop-color="#2a7bd0"/><stop offset=".5" stop-color="#6cb6ee"/><stop offset="1" stop-color="#2e7fd0"/></linearGradient>
<linearGradient id="f4" x1="0" y1="0" x2=".6" y2="1"><stop offset="0" stop-color="#fce37a"/><stop offset=".5" stop-color="#fbc53a"/><stop offset="1" stop-color="#f29a1c"/></linearGradient>
</defs>
<circle cx="28" cy="28" r="25.6" fill="url(#ob)"/>
<path d="M3.6 27C4 13 14.5 3.4 28 3.4C41.5 3.4 52 13 52.4 27C47 30.5 41 31.5 34.5 29.5C29.5 28 25.5 25 19 25.5C13 26 8 28 3.6 27Z" fill="url(#og)"/>
<circle cx="28" cy="28" r="25.6" fill="none" stroke="#d7e9f8" stroke-width="1.1" stroke-opacity=".9"/>
<circle cx="28" cy="28" r="24.3" fill="none" stroke="#12365f" stroke-width="1" stroke-opacity=".45"/>
<path d="M17.6 13.2C21.5 10.6 26 10.6 30.4 13.3L28.3 25C24.3 22.8 19.8 22.6 15 25.5Z" fill="url(#f1)"/>
<path d="M32.4 14.6C36 17.4 40.8 17.4 44.8 14.7L42.3 26.8C38.3 29.6 33.8 29.6 30.2 26.8Z" fill="url(#f2)"/>
<path d="M14.5 27.6C18.5 25 23.3 24.8 27.8 27L25.6 38.4C21.5 36.3 16.5 36.2 11.4 39.5Z" fill="url(#f3)"/>
<path d="M29.6 28.8C33.2 31.7 37.8 31.8 42 29.2L39.6 41.2C35.4 44.2 30.6 44 27.2 41.1Z" fill="url(#f4)"/>
</svg>
<svg class="abs" style="left:96px;top:1px" width="56" height="56" viewBox="0 0 56 56">
<defs><linearGradient id="ie" x1="0" y1="0" x2=".3" y2="1"><stop offset="0" stop-color="#b5f0fc"/><stop offset=".45" stop-color="#5dd2f6"/><stop offset="1" stop-color="#2aa2e6"/></linearGradient>
<linearGradient id="iy" x1="0" y1="1" x2="1" y2="0"><stop offset="0" stop-color="#f3b616"/><stop offset=".5" stop-color="#fbd63c"/><stop offset="1" stop-color="#f5c22a"/></linearGradient>
<clipPath id="iec"><rect x="-40" y="-30" width="80" height="30.5"/></clipPath>
</defs>
<g transform="translate(27.4,27.15) rotate(-44)"><path d="M-28.6 0A28.6 13.65 0 1 0 28.6 0A28.6 13.65 0 1 0 -28.6 0ZM-24 0.4A25.3 10.2 0 1 1 26.6 0.4A25.3 10.2 0 1 1 -24 0.4Z" fill-rule="evenodd" fill="url(#iy)"/></g>
<ellipse cx="30.4" cy="28.6" rx="19.3" ry="19.6" fill="#2f8bc8"/>
<path d="M49.7 31A19.4 19.7 0 1 0 48 36H38.2C36.6 38.8 33.6 40.5 29.8 40.5C24.4 40.5 20.6 36.8 20.2 31ZM20.3 25.1C21 19.4 24.6 15.6 29.6 15.6C34.6 15.6 38.2 19.4 38.8 25.1Z" fill="url(#ie)" stroke="#2387ca" stroke-width=".7" fill-rule="evenodd"/>
<g transform="translate(27.4,27.15) rotate(-44)" clip-path="url(#iec)"><path d="M-28.6 0A28.6 13.65 0 1 0 28.6 0A28.6 13.65 0 1 0 -28.6 0ZM-24 0.4A25.3 10.2 0 1 1 26.6 0.4A25.3 10.2 0 1 1 -24 0.4Z" fill-rule="evenodd" fill="url(#iy)" stroke="#dca012" stroke-width=".4"/></g>
</svg>
<svg class="abs" style="left:177px;top:4px" width="50" height="50" viewBox="0 0 50 50">
<defs><linearGradient id="op" x1="0" y1="0" x2="1" y2="1"><stop offset="0" stop-color="#ff2438"/><stop offset=".5" stop-color="#ea1424"/><stop offset="1" stop-color="#c00d1a"/></linearGradient>
<linearGradient id="op2" x1=".2" y1="0" x2=".8" y2="1"><stop offset="0" stop-color="#a80a14"/><stop offset=".45" stop-color="#d4121e"/><stop offset="1" stop-color="#ff5a58"/></linearGradient></defs>
<circle cx="24.9" cy="25" r="23.2" fill="url(#op)"/>
<path d="M30 3.200C41 5.500 48.100 14.500 48.100 25C48.100 35.500 41 44.500 30 46.800C35 42 37.500 34.500 37.500 25C37.500 15.500 35 8 30 3.200Z" fill="url(#op2)"/>
<ellipse cx="25.1" cy="24.8" rx="11.3" ry="16.5" fill="#3a98d4"/>
</svg>
<svg class="abs" style="left:254.6px;top:4px" width="50" height="50" viewBox="0 0 50 50"><circle cx="25" cy="25" r="22.3" fill="#dd4b3e"/><path d="M25 25L44.31 13.85A22.3 22.3 0 0 1 22.28 47.13L33.66 30Z" fill="#fdc73a"/><path d="M25 15H44.87A22.3 22.3 0 0 1 22.28 47.13L33.66 30Z" fill="#fdc73a"/><path d="M22.28 47.13A22.3 22.3 0 0 1 5.13 14.88L16.34 30L33.66 30Z" fill="#1ea362"/><circle cx="25" cy="25" r="10.2" fill="#f4f4f4"/><circle cx="25" cy="25" r="8" fill="#4a8af4"/></svg>
<svg class="abs" style="left:326px;top:1px" width="60" height="56" viewBox="0 0 60 56">
<defs><linearGradient id="wd" x1="1" y1="0" x2="0" y2="1"><stop offset="0" stop-color="#b9c9ea"/><stop offset=".5" stop-color="#5c84cc"/><stop offset="1" stop-color="#1c4aa6"/></linearGradient>
<linearGradient id="wp" x1="0" y1="0" x2="1" y2="1"><stop offset="0" stop-color="#ffffff"/><stop offset="1" stop-color="#e3edf8"/></linearGradient></defs>
<path d="M22 5.2H46.8V30H20V42.6H9.2V19C9.2 10 13.5 5.2 22 5.2Z" fill="url(#wd)" stroke="#e6eefa" stroke-width="1.2"/>
<path d="M22.9 9.9L54.1 11.8L51.3 48.5L17 44.6Z" fill="url(#wp)" stroke="#b8cbe6" stroke-width=".6"/>
<text x="32.6" y="27.3" font-family="Liberation Sans,sans-serif" font-weight="bold" font-style="italic" font-size="15.5" fill="#2b4fa3" text-anchor="middle" transform="rotate(4 32 22)">W</text>
<g stroke="#23408f" transform="rotate(4.5 36 30)"><path d="M42 17H49M42 22H49M42 27H49" stroke-width="2.5"/><path d="M23.6 33H48M23.6 38.3H48" stroke-width="3.3"/></g>
</svg>
<svg class="abs" style="left:412px;top:5px" width="48" height="48" viewBox="0 0 48 48"><rect width="48" height="48" rx="4" fill="#fff"/><ellipse cx="24" cy="23.5" rx="16.5" ry="13" fill="none" stroke="#5e5e5e" stroke-width="2.6" transform="rotate(-18 24 23.5)"/><circle cx="24" cy="9.5" r="3.9" fill="#9898ea" stroke="#16163a" stroke-width="1.4"/><circle cx="40" cy="18.5" r="3.9" fill="#9898ea" stroke="#16163a" stroke-width="1.4"/><circle cx="33.5" cy="34" r="3.9" fill="#9898ea" stroke="#16163a" stroke-width="1.4"/><circle cx="14.5" cy="36" r="3.9" fill="#9898ea" stroke="#16163a" stroke-width="1.4"/><circle cx="8.5" cy="21" r="3.9" fill="#9898ea" stroke="#16163a" stroke-width="1.4"/></svg>
<svg class="abs" style="left:484px;top:1px" width="62" height="56" viewBox="0 0 62 56">
<defs><linearGradient id="fo" x1="0" y1="0" x2="0" y2="1"><stop offset="0" stop-color="#fcf0b4"/><stop offset=".5" stop-color="#f8e189"/><stop offset="1" stop-color="#efcb5a"/></linearGradient>
<linearGradient id="fb" x1="0" y1="0" x2="0" y2="1"><stop offset="0" stop-color="#d6f0fb" stop-opacity=".96"/><stop offset="1" stop-color="#7ec0e6" stop-opacity=".96"/></linearGradient></defs>
<path d="M10.3 7C10.3 5.8 11 5.1 12.2 5.1H27C28.5 5.1 29.2 6 29.2 7.5V16H10.3Z" fill="#f6dd82" stroke="#d9b857" stroke-width=".8"/>
<rect x="13" y="7.1" width="14" height="2.9" fill="#fff"/><rect x="13" y="7.1" width="2.9" height="2.9" fill="#2f9a3d"/>
<path d="M22.9 12C22.9 9.8 24 8.3 26 8.3H38.5C40 8.3 40.3 9.3 40.3 10.8V18H22.9Z" fill="#f6dd82" stroke="#d9b857" stroke-width=".8"/>
<rect x="24" y="9.9" width="13" height="2.9" fill="#fff"/><rect x="24" y="9.9" width="2.9" height="2.9" fill="#d3382c"/>
<path d="M33.1 14.5C33.1 12.3 34.2 11 36.2 11H50.2C51.7 11 52.1 12 52.1 13.5V20H33.1Z" fill="#f6dd82" stroke="#d9b857" stroke-width=".8"/>
<rect x="37.1" y="13" width="12" height="2.9" fill="#fff"/><rect x="37.1" y="13" width="2.9" height="2.9" fill="#2f7fcf"/>
<path d="M7.5 15.6C7.5 14.4 8.2 13.8 9.4 13.8H30.5C32 13.8 32.6 14.5 33.2 15.5C33.8 16.5 34.5 17 36 17H52.2C53.5 17 54.1 17.7 54.1 18.9V47.4H7.5Z" fill="url(#fo)" stroke="#d4b04c" stroke-width=".9"/>
<path d="M12.6 35C12.6 33 13.6 32 15.6 32H45.1C47.1 32 48.1 33 48.1 35V49.7H12.6Z" fill="url(#fb)" stroke="#9fd0ea" stroke-width=".8"/>
<path d="M22.5 49.7V44.3C22.5 43.2 23.1 42.6 24.2 42.6H36.6C37.7 42.6 38.3 43.2 38.3 44.3V49.7Z" fill="#f3d76c" stroke="#d4b04c" stroke-width=".8"/>
<rect x="7" y="47.4" width="48" height="4" fill="none"/>
</svg>
<svg class="abs" style="left:564px;top:1px" width="60" height="56" viewBox="80 0 60 56">
<defs><linearGradient id="pa" x1="0" y1="0" x2="1" y2="1"><stop offset="0" stop-color="#eef6fc"/><stop offset="1" stop-color="#a9cdea"/></linearGradient>
<linearGradient id="pbr" x1="0" y1="0" x2="1" y2="0"><stop offset="0" stop-color="#f0a040"/><stop offset="1" stop-color="#c8701c"/></linearGradient></defs>
<path d="M106 14.5C117 11.5 127 16.5 127 26C127 36 118 44 107 46.4C102.5 47.4 99.5 46 98.8 42.8C98.2 39.6 97.2 37 93.5 37.8C89 38.8 85.2 37.8 85.2 33.5C85.2 25.5 94 17.5 106 14.5Z" fill="url(#pa)" stroke="#8fb6d8" stroke-width=".7"/>
<circle cx="92.3" cy="29.2" r="3.5" fill="#d9403a"/><circle cx="99.6" cy="22.5" r="3.5" fill="#5cb548"/><circle cx="109.7" cy="18.5" r="3.7" fill="#f3b62b"/><circle cx="104.2" cy="32.4" r="2.6" fill="#4b93d4"/>
<path d="M122 14.5L124.6 15.6L110 48.5L107.6 49.6L107.4 47Z" fill="url(#pbr)" stroke="#b0661c" stroke-width=".4"/>
<path d="M122 14.5L124.6 15.6L127 9.5L123.5 8Z" fill="#cfd4da" stroke="#8e98a4" stroke-width=".4"/>
<path d="M120 6.7C123 5.5 129 7.5 131.4 11.8L126.8 10.4L123.4 8.6Z" fill="#d7b07a" stroke="#a8824e" stroke-width=".4"/>
<path d="M120 6.7L123.4 8.6L126.8 10.4L131.4 11.8L126.5 4.5L122 5Z" fill="#dcb27a"/>
</svg>
<svg class="abs" style="left:645px;top:4px" width="50" height="50" viewBox="0 0 50 50">
<circle cx="25" cy="25" r="23.3" fill="#f5f5f7"/>
<path d="M11.4 11.6L24.7 25.4L38.1 11.6" fill="none" stroke="#dd1218" stroke-width="5.4" stroke-linejoin="miter"/>
<path d="M24.7 24.5V43.6" stroke="#e3171c" stroke-width="5.2"/>
</svg>
<div class="t tray" style="left:1113.5px;top:20.2px;font-size:16px;">RU</div>
<svg class="abs" style="left:1164px;top:26px" width="14" height="8" viewBox="0 0 14 8"><path d="M1.2 7.5L7.4 1.2L13.6 7.5Z" fill="#fff"/></svg>
<svg class="abs" style="left:1201px;top:17px" width="28" height="26" viewBox="0 0 28 26">
<path d="M3 1.8V24.5" stroke="#fff" stroke-width="1.8"/>
<path d="M4.5 3C8 1.5 11 2 13.5 4C16.5 6.4 20 6.5 25 4.5C24 9 22.5 12.5 19.5 15C16 13 13 13 10 14.2C8 15 6 15.5 4.5 15.3Z" fill="#fff" stroke="#1a3d6e" stroke-width=".6"/>
</svg>
<svg class="abs" style="left:1238px;top:22px" width="24" height="18" viewBox="0 0 24 18">
<rect x="1.5" y="14" width="3" height="2.5" fill="#fff"/><rect x="5.8" y="11" width="3" height="5.5" fill="#fff"/>
<rect x="10.1" y="7.5" width="3.2" height="9" fill="#8fa7c8" stroke="#c9d6e8" stroke-width=".5"/><rect x="14.5" y="4" width="3.2" height="12.5" fill="#6f8bb2" stroke="#b9c9de" stroke-width=".5"/><rect x="18.9" y="0.8" width="3.2" height="15.7" fill="#5d7aa5" stroke="#a9bcd6" stroke-width=".5"/>
</svg>
<svg class="abs" style="left:1272px;top:18px" width="28" height="24" viewBox="0 0 28 24">
<path d="M2.5 7.5H6.5L12.2 1.5V22L6.5 16H2.5Z" fill="#fff" stroke="#27466f" stroke-width=".6"/>
<path d="M4.8 7.8V15.8" stroke="#9fb2cc" stroke-width="1.2"/>
<g fill="none" stroke="#fff" stroke-width="1.3" stroke-linecap="round"><path d="M15 9.5C16 10.5 16 13 15 14"/><path d="M17.8 7.3C19.8 9.5 19.8 14 17.8 16.2"/><path d="M20.6 5C23.8 8.5 23.8 15 20.6 18.5"/></g>
</svg>
<div class="t tray" style="left:1343.8px;top:10.7px;font-size:17.5px;">23:19</div>
<div class="t tray" style="left:1322.4px;top:37.1px;font-size:17.5px;">22.01.2018</div>
<div class="abs" style="left:1425px;top:1px;width:1px;height:56px;background:rgba(8,28,56,.75)"></div><div class="abs" style="left:1426px;top:2px;width:13px;height:54px;box-sizing:border-box;border:1px solid rgba(150,185,225,.75);background:linear-gradient(135deg,rgba(255,255,255,.38),rgba(255,255,255,.08) 35%,rgba(255,255,255,0) 60%,rgba(255,255,255,.10))"></div><div class="abs" style="left:1439px;top:1px;width:1px;height:56px;background:rgba(8,28,56,.6)"></div>
</div>
</div>
</body></html>
